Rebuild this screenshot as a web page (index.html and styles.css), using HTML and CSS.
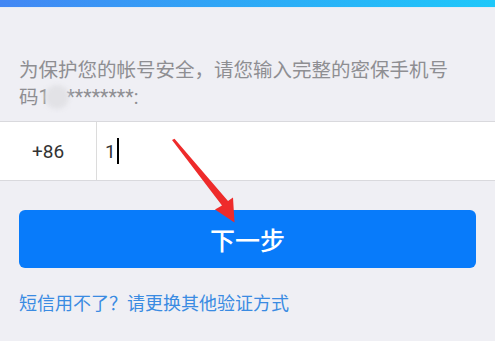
FILE: index.html
```html
<!DOCTYPE html>
<html lang="zh-CN">
<head>
<meta charset="utf-8">
<link rel="stylesheet" href="styles.css">
</head>
<body>
<div class="page">
  <div class="topbar"></div>
  <p class="hint">为保护您的帐号安全，请您输入完整的密保手机号<br>码1<span class="blur"></span>********:</p>
  <div class="phone-row">
    <div class="code">+86</div>
    <div class="number"><span>1</span><span class="cursor"></span></div>
  </div>
  <button class="next">下一步</button>
  <a class="alt">短信用不了？请更换其他验证方式</a>
  <svg class="arrow" width="495" height="341" viewBox="0 0 495 341">
    <path d="M172 140 L174.5 138.8 L228 201 L233 197.5 L234.5 222.5 L215 209.5 L222 205.5 Z" fill="#ee2b2b"/>
  </svg>
</div>
</body>
</html>
```

FILE: styles.css
```css
html, body {
  margin: 0;
  padding: 0;
  background: #efeff4;
}
.page {
  position: relative;
  width: 495px;
  height: 341px;
  overflow: hidden;
  font-family: Roboto, "Noto Sans CJK SC", sans-serif;
}
.topbar {
  height: 7px;
  background: linear-gradient(to right, #4387f4, #2fa6f6 45%, #1ec8fa);
  border-bottom: 1px solid #e4ecf6;
}
.hint {
  margin: 49px 0 0 0;
  padding: 0 19px;
  font-size: 19.5px;
  line-height: 27px;
  color: #8e8e92;
}
.blur {
  display: inline-block;
  width: 24px;
  height: 24px;
  margin: 0 -3px 0 -4px;
  vertical-align: -5px;
  border-radius: 50%;
  background: #e2e2e6;
  filter: blur(2px);
}
.phone-row {
  display: flex;
  margin-top: 10px;
  height: 58px;
  background: #fff;
  border-top: 1px solid #d9d9dd;
  border-bottom: 1px solid #d9d9dd;
}
.code {
  width: 96px;
  border-right: 1px solid #dcdcdc;
  display: flex;
  align-items: center;
  justify-content: center;
  font-size: 19px;
  color: #333;
}
.number {
  display: flex;
  align-items: center;
  padding-left: 8px;
  font-size: 19px;
  color: #333;
}
.cursor {
  display: inline-block;
  width: 2.5px;
  height: 26px;
  margin-left: 1px;
  background: #000;
}
.next {
  display: block;
  width: calc(100% - 38px);
  margin: 29px 19px 0 19px;
  height: 58px;
  border: none;
  border-radius: 6px;
  background: #087bfa;
  color: #fff;
  font-family: Roboto, "Noto Sans CJK SC", sans-serif;
  font-size: 25px;
  font-weight: 500;
  padding: 0;
}
.alt {
  display: block;
  margin: 24px 19px 0 19px;
  font-size: 18px;
  line-height: 24px;
  color: #3a8be2;
}
.arrow {
  position: absolute;
  left: 0;
  top: 0;
  pointer-events: none;
}
```
